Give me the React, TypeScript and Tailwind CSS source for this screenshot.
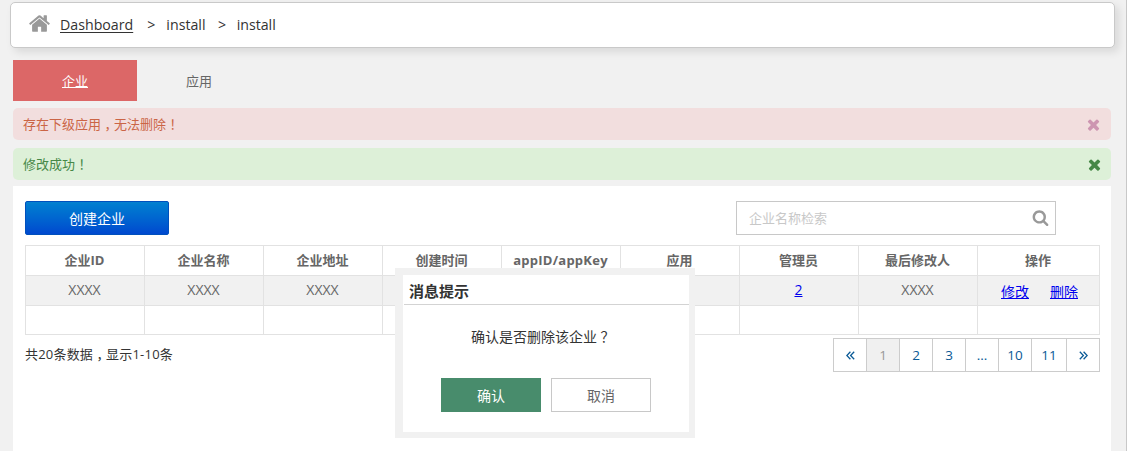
import React from 'react';

const HOME =
  'M1472 992v480q0 26-19 45t-45 19h-384v-384h-256v384h-384q-26 0-45-19t-19-45v-480q0-1 .5-3t.5-3l575-474 575 474q1 2 1 6zm223-69l-62 74q-8 9-21 11h-3q-13 0-21-7l-692-577-692 577q-12 8-24 7-13-2-21-11l-62-74q-8-10-7-23.5t11-21.5l719-599q32-26 76-26t76 26l244 204v-195q0-14 9-23t23-9h192q14 0 23 9t9 23v408l219 182q10 8 11 21.5t-7 23.5z';
const CLOSE =
  'M1490 1322q0 40-28 68l-136 136q-28 28-68 28t-68-28l-294-294-294 294q-28 28-68 28t-68-28l-136-136q-28-28-28-68t28-68l294-294-294-294q-28-28-28-68t28-68l136-136q28-28 68-28t68 28l294 294 294-294q28-28 68-28t68 28l136 136q28 28 28 68t-28 68l-294 294 294 294q28 28 28 68z';
const SEARCH =
  'M1216 832q0-185-131.5-316.5t-316.5-131.5-316.5 131.5-131.5 316.5 131.5 316.5 316.5 131.5 316.5-131.5 131.5-316.5zm512 832q0 52-38 90t-90 38q-54 0-90-38l-343-342q-179 124-399 124-143 0-273.5-55.5t-225-150-150-225-55.5-273.5 55.5-273.5 150-225 225-150 273.5-55.5 273.5 55.5 225 150 150 225 55.5 273.5q0 220-124 399l343 343q37 37 37 90z';

function Icon({ d, className }: { d: string; className: string }) {
  return (
    <svg viewBox="0 0 1792 1792" fill="currentColor" className={className} aria-hidden="true">
      <path d={d} />
    </svg>
  );
}

function DoubleAngle({ right = false }: { right?: boolean }) {
  return (
    <svg viewBox="0 0 9 9" fill="none" stroke="currentColor" strokeWidth="1.3" className="size-[9px]" aria-hidden="true">
      <path d={right ? 'M.8 .7 4.4 4.5 .8 8.3M4.6 .7 8.2 4.5 4.6 8.3' : 'M8.2 .7 4.6 4.5 8.2 8.3M4.4 .7 .8 4.5 4.4 8.3'} />
    </svg>
  );
}

/* Full-width punctuation set in the middle of its em box. */
function Mark({ children }: { children: string }) {
  return <span className="inline-block w-[1em] whitespace-nowrap pl-[3.5px] tracking-normal">{children}</span>;
}

function Breadcrumb() {
  return (
    <nav className="ml-[10px] mt-[2px] flex h-[46px] w-[1105px] shrink-0 items-center rounded-[5px] border border-[#c9c9c9] bg-white pl-[17px] text-[14.2px] text-[#333] shadow-[4px_4px_8px_rgba(0,0,0,0.1)]">
      <Icon d={HOME} className="mr-[9px] -mt-[4px] size-[23px] text-[#999]" />
      <a href="#" className="underline underline-offset-[2px]">Dashboard</a>
      <span className="ml-[14px]">&gt;</span>
      <span className="ml-[11px]">install</span>
      <span className="ml-[12.5px]">&gt;</span>
      <span className="ml-[10.5px]">install</span>
    </nav>
  );
}

const columns = ['企业ID', '企业名称', '企业地址', '创建时间', 'appID/appKey', '应用', '管理员', '最后修改人', '操作'];
const row = ['XXXX', 'XXXX', 'XXXX', '', '', '', '2', 'XXXX', ''];
const cell = 'border border-[#e2e2e2] p-0 text-center align-middle';

function CompanyTable() {
  return (
    <table className="mt-[10px] w-[1075px] table-fixed border-collapse text-[13px] text-[#666]">
      <colgroup>
        {columns.map((c, i) => (
          <col key={c} className={i === 8 ? 'w-[122px]' : 'w-[119px]'} />
        ))}
      </colgroup>
      <thead>
        <tr className="h-[30px]">
          {columns.map((c, i) => (
            <th key={c} className={`${cell} pb-[2px] pr-px font-bold leading-5 ${i === 4 ? 'tracking-[0.25px]' : ''}`}>{c}</th>
          ))}
        </tr>
      </thead>
      <tbody>
        <tr className="h-[30px] bg-[#f1f1f1]">
          {columns.map((c, i) => (
            <td key={c} className={`${cell} text-sm leading-5 ${i === 8 ? '' : 'pb-[2px] pr-px'}`}>
              {i === 6 ? (
                <a href="#" className="text-[#0000ee] underline">{row[i]}</a>
              ) : i === 8 ? (
                <span className="flex justify-center gap-[21px] pl-[2px] pt-[3px] text-[#0000ee]">
                  <a href="#" className="underline">修改</a>
                  <a href="#" className="underline">删除</a>
                </span>
              ) : (
                row[i]
              )}
            </td>
          ))}
        </tr>
        <tr className="h-[29px]">
          {columns.map((c) => (
            <td key={c} className={cell} />
          ))}
        </tr>
      </tbody>
    </table>
  );
}

const pageItem = 'flex h-full items-center justify-center border-r border-[#ccc]';

function Pagination() {
  return (
    <div className="flex h-[34px] w-[267px] border border-r-0 border-[#ccc] text-[13.5px] text-[#0a5a96]">
      <a className={`${pageItem} w-[33px]`}><DoubleAngle /></a>
      <a className={`${pageItem} w-[33px] bg-[#f0f0f0] text-[#999]`}>1</a>
      <a className={`${pageItem} w-[33px]`}>2</a>
      <a className={`${pageItem} w-[33px]`}>3</a>
      <a className={`${pageItem} w-[33px]`}>...</a>
      <a className={`${pageItem} w-[33px]`}>10</a>
      <a className={`${pageItem} w-[35px]`}>11</a>
      <a className={`${pageItem} w-[33px]`}><DoubleAngle right /></a>
    </div>
  );
}

function ConfirmDialog() {
  return (
    <div className="absolute left-[395px] top-[268px] h-[170px] w-[300px] border-[#f1f1f1] border-b-[6px] border-l-8 border-r-[6px] border-t-[7px] bg-white text-sm">
      <h2 className="ml-px h-[30px] border-b border-[#d3d3d3] pl-[5px] text-[15px] font-bold leading-[32px] text-[#333]">消息提示</h2>
      <p className="mt-[22px] whitespace-nowrap pl-[68px] leading-5 text-[#333]">确认是否删除该企业<Mark>？</Mark></p>
      <div className="ml-[38px] mt-[31px] flex gap-[10px]">
        <button className="h-[34px] w-[100px] bg-[#488c6c] pt-[2px] text-white">确认</button>
        <button className="h-[34px] w-[100px] border border-[#c8c8c8] bg-white pt-[2px] text-[#666]">取消</button>
      </div>
    </div>
  );
}

export default function App() {
  return (
    <div className="relative h-[451px] w-[1132px] overflow-hidden bg-white font-['Open_Sans','Noto_Sans_CJK_SC',sans-serif]">
      <div className="flex h-full w-[1127px] flex-col border-r border-[#c8c8c8] bg-[#f1f1f1]">
        <Breadcrumb />
        <div className="ml-[13px] mt-3 flex h-[41px] shrink-0 text-[13px]">
          <a href="#" className="flex w-[124px] items-center justify-center bg-[#dc6767] pt-[2px] text-white underline">企业</a>
          <a className="flex w-[124px] items-center justify-center pt-[2px] text-[#666]">应用</a>
        </div>
        <div className="ml-[13px] mt-[7px] flex h-8 w-[1098px] shrink-0 items-center justify-between rounded-[5px] bg-[#f2dede] pl-[9px] pr-[9px] text-[13px] text-[#cb6546]">
          <span className="whitespace-nowrap pl-px pt-px">存在下级应用<Mark>，</Mark>无法删除<Mark>！</Mark></span>
          <Icon d={CLOSE} className="mt-px size-[17px] text-[#cd95b1]" />
        </div>
        <div className="ml-[13px] mt-2 flex h-8 w-[1098px] shrink-0 items-center justify-between rounded-[5px] bg-[#ddf0d8] pl-[9px] pr-2 text-[13px] text-[#468847]">
          <span className="whitespace-nowrap pl-px pt-px">修改成功<Mark>！</Mark></span>
          <Icon d={CLOSE} className="mt-px size-[17px] text-[#468847]" />
        </div>
        <main className="ml-[13px] mt-[6px] w-[1098px] flex-1 bg-white pl-3 pt-[15px]">
          <div className="flex justify-between pr-[55px]">
            <button className="h-[34px] w-36 rounded-[2px] border border-[#0050bd] bg-linear-to-b from-[#0480d0] to-[#0048cf] pt-px text-sm text-white">创建企业</button>
            <div className="flex h-[34px] w-80 items-center justify-between border border-[#c8c8c8] pl-3 pr-[6px] text-[13px] text-[#c8c8c8]">
              <span className="pt-px">企业名称检索</span>
              <Icon d={SEARCH} className="-mt-[2px] size-[17px] text-[#999]" />
            </div>
          </div>
          <CompanyTable />
          <div className="mt-[3px] flex w-[1075px] justify-between">
            <span className="mt-[6px] whitespace-nowrap text-[13px] leading-5 tracking-[0.2px] text-[#333]">共20条数据<Mark>，</Mark>显示1-10条</span>
            <Pagination />
          </div>
        </main>
      </div>
      <ConfirmDialog />
    </div>
  );
}
